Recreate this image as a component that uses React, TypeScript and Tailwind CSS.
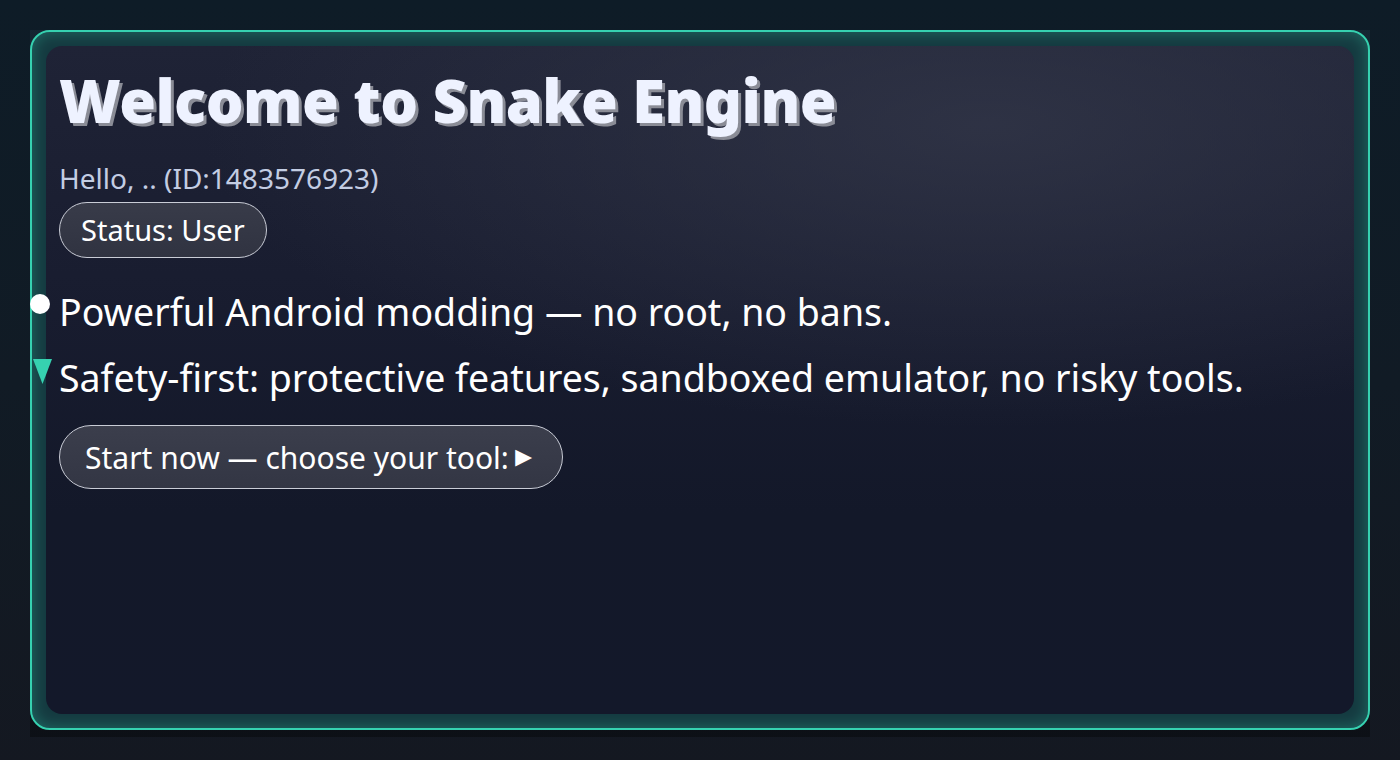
export default function App() {
  return (
    <div className="min-h-screen w-full bg-[linear-gradient(180deg,#0e1c27_0%,#111b25_50%,#141821_100%)] p-[30px] font-['Noto_Sans',sans-serif]">
      <div className="h-[707px] bg-[linear-gradient(180deg,rgba(40,70,85,0.25)_0%,rgba(10,14,22,0.2)_60%,rgba(0,0,0,0.35)_100%)]">
        <div className="h-[700px] rounded-[20px] border-2 border-[#36d1b0] bg-[#153a40] p-[14px] shadow-[inset_0_0_16px_rgba(54,209,176,0.35)]">
          <div className="relative h-full rounded-[16px] bg-[radial-gradient(ellipse_60%_45%_at_72%_12%,rgba(52,56,74,0.75)_0%,rgba(52,56,74,0)_100%),linear-gradient(180deg,#1f2336_0%,#181c2f_40%,#131829_70%,#13182a_100%)] px-[13px] pt-[21px]">
            <h1 className="text-[59.5px] font-black leading-[1.1] tracking-[-0.5px] text-[#eef2ff] [text-shadow:3px_3px_0_#8a8c96]">
              Welcome to Snake Engine
            </h1>
            <p className="mt-[28px] text-[28px] leading-[1.3] text-[#c3cde3]">Hello, .. (ID:1483576923)</p>
            <div className="mt-[5px] inline-flex h-[56px] items-center rounded-full border border-[#c9ccd6] bg-[linear-gradient(180deg,#383b49_0%,#303341_100%)] px-[21px] text-[29px] text-white">
              Status: User
            </div>
            <div className="mt-[26px] flex flex-col gap-[10px]">
              <div className="relative text-[37.5px] leading-[1.5] text-white">
                <span className="absolute left-[-29px] top-[10px] h-[20px] w-[20px] rounded-full bg-white" />
                Powerful Android modding — no root, no bans.
              </div>
              <div className="relative text-[37.5px] leading-[1.5] text-white">
                <svg className="absolute left-[-26px] top-[9px]" width="19" height="25" viewBox="0 0 19 25">
                  <polygon points="0,0 19,0 9.5,25" fill="#36d1b0" />
                </svg>
                Safety-first: protective features, sandboxed emulator, no risky tools.
              </div>
            </div>
            <div className="mt-[19px] inline-flex h-[64px] items-center rounded-full border border-[#c9ccd6] bg-[linear-gradient(180deg,#3b3e4c_0%,#333644_100%)] pl-[25px] pr-[24px] text-[30px] text-white">
              Start now — choose your tool:
              <span className="ml-[1px] -mt-[4px] text-[28px] leading-none">►</span>
            </div>
          </div>
        </div>
      </div>
    </div>
  );
}
